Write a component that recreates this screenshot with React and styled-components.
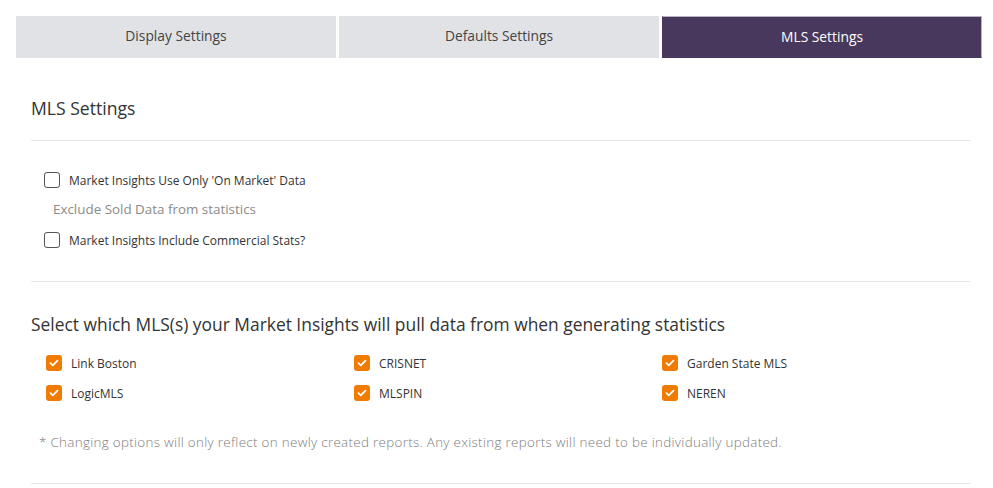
import React, { useState } from 'react';
import styled, { createGlobalStyle } from 'styled-components';

const GlobalStyle = createGlobalStyle`
  body {
    margin: 0;
    background: #fff;
    font-family: "Open Sans", "Lato", sans-serif;
    color: #333;
  }
`;

const Page = styled.div`
  padding: 16px 11px 0 16px;
`;

const Tabs = styled.div`
  display: grid;
  grid-template-columns: 320px 320px 320px;
  column-gap: 3px;
`;

const Tab = styled.button`
  height: 42px;
  border: 1px solid ${(p) => (p.$active ? '#b9b4c2' : '#e1e2e6')};
  border-left-color: ${(p) => (p.$active ? '#48385d' : '#e1e2e6')};
  border-bottom-color: ${(p) => (p.$active ? '#48385d' : '#e1e2e6')};
  background: ${(p) => (p.$active ? '#48385d' : '#e1e2e6')};
  color: ${(p) => (p.$active ? '#fff' : '#444')};
  font-family: inherit;
  font-size: 13.8px;
  padding: 0 0 ${(p) => (p.$active ? '2px' : '4px')};
  cursor: pointer;
`;

const Content = styled.div`
  padding: 0 12px 0 15px;
`;

const Title = styled.h2`
  margin: 0;
  font-size: 17.6px;
  font-weight: 400;
  color: #333;
  line-height: 20px;
  padding: 40px 0 22px;
  border-bottom: 1px solid #e6e6e6;
`;

const OptionGroup = styled.div`
  padding: 31px 0 33px 13px;
  border-bottom: 1px solid #e6e6e6;
  display: flex;
  flex-direction: column;
`;

const Row = styled.label`
  display: flex;
  align-items: center;
  gap: 9px;
  height: 16px;
  font-size: 12px;
  color: #333;
  cursor: pointer;
`;

const Box = styled.span`
  flex: none;
  width: 16px;
  height: 16px;
  box-sizing: border-box;
  border-radius: 3px;
  border: ${(p) => (p.$checked ? 'none' : '1.5px solid #555')};
  background: ${(p) => (p.$checked ? '#ef7b00' : '#fff')};
  display: flex;
  align-items: center;
  justify-content: center;
`;

const Hint = styled.div`
  font-size: 13.4px;
  color: #8a8a8a;
  padding: 14px 0 15px 9px;
  line-height: 15px;
`;

const SubTitle = styled.h3`
  margin: 0;
  font-size: 17.4px;
  font-weight: 400;
  color: #333;
  line-height: 20px;
  padding: 32px 0 21px;
`;

const MlsGrid = styled.div`
  display: grid;
  grid-template-columns: repeat(3, 308px);
  row-gap: 14px;
  padding-left: 15px;
`;

const Note = styled.p`
  margin: 0;
  font-size: 13.4px;
  font-weight: 300;
  letter-spacing: 0.31px;
  color: #7d7d7d;
  padding: 34px 0 34px 8px;
  line-height: 14px;
  border-bottom: 1px solid #e6e6e6;
`;

const Check = () => (
  <svg width="10" height="8" viewBox="0 0 10 8">
    <path d="M1.5 4.2 L3.8 6.3 L8.5 1.6" fill="none" stroke="#fff" strokeWidth="1.8" strokeLinecap="round" strokeLinejoin="round" />
  </svg>
);

const Checkbox = ({ checked, onChange, children }) => (
  <Row onClick={onChange}>
    <Box $checked={checked}>{checked && <Check />}</Box>
    {children}
  </Row>
);

const mlsList = ['Link Boston', 'CRISNET', 'Garden State MLS', 'LogicMLS', 'MLSPIN', 'NEREN'];

export default function App() {
  const [tab, setTab] = useState(2);
  const [onMarket, setOnMarket] = useState(false);
  const [commercial, setCommercial] = useState(false);
  const [selected, setSelected] = useState(mlsList);

  const toggle = (name) =>
    setSelected((s) => (s.includes(name) ? s.filter((n) => n !== name) : [...s, name]));

  return (
    <Page>
      <GlobalStyle />
      <Tabs>
        {['Display Settings', 'Defaults Settings', 'MLS Settings'].map((t, i) => (
          <Tab key={t} $active={tab === i} onClick={() => setTab(i)}>
            {t}
          </Tab>
        ))}
      </Tabs>
      <Content>
        <Title>MLS Settings</Title>
        <OptionGroup>
          <Checkbox checked={onMarket} onChange={() => setOnMarket(!onMarket)}>
            Market Insights Use Only 'On Market' Data
          </Checkbox>
          <Hint>Exclude Sold Data from statistics</Hint>
          <Checkbox checked={commercial} onChange={() => setCommercial(!commercial)}>
            Market Insights Include Commercial Stats?
          </Checkbox>
        </OptionGroup>
        <SubTitle>Select which MLS(s) your Market Insights will pull data from when generating statistics</SubTitle>
        <MlsGrid>
          {mlsList.map((m) => (
            <Checkbox key={m} checked={selected.includes(m)} onChange={() => toggle(m)}>
              {m}
            </Checkbox>
          ))}
        </MlsGrid>
        <Note>
          * Changing options will only reflect on newly created reports. Any existing reports will need to be individually updated.
        </Note>
      </Content>
    </Page>
  );
}
